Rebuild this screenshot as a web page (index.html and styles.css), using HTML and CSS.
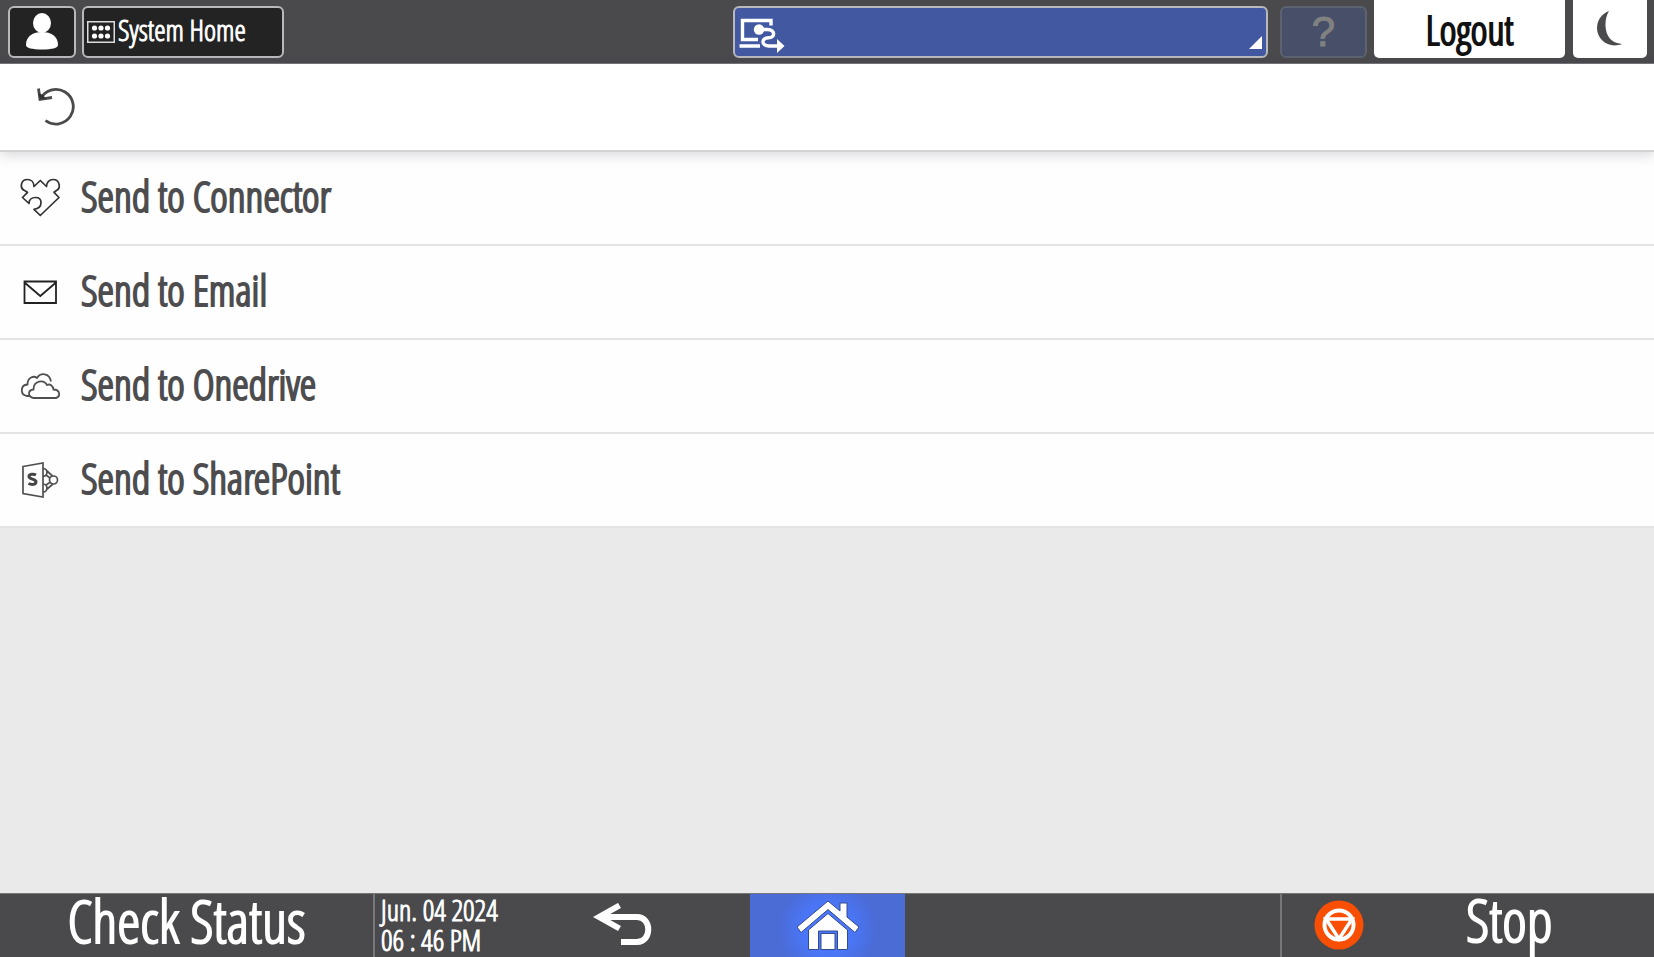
FILE: index.html
```html
<!DOCTYPE html>
<html lang="en">
<head>
<meta charset="utf-8">
<meta name="viewport" content="width=device-width, initial-scale=1">
<title>System Home</title>
<link rel="stylesheet" href="styles.css">
</head>
<body>
<header class="topbar">
  <button class="key key-user" type="button" aria-label="User">
    <svg width="34" height="38" viewBox="0 0 34 38" fill="#fff"><ellipse cx="17" cy="10" rx="9" ry="10"/><path d="M1 32C1 23 8 19 17 19s16 4 16 13c0 3-6 4.500-16 4.500S1 35 1 32z"/></svg>
  </button>
  <button class="key key-system" type="button">
    <svg width="28" height="22" viewBox="0 0 28 22"><rect x=".75" y=".75" width="26.500" height="20.500" fill="none" stroke="#ddd" stroke-width="1.500"/><g fill="#fff"><circle cx="7.500" cy="7" r="2.600"/><circle cx="14" cy="7" r="2.600"/><circle cx="20.500" cy="7" r="2.600"/><circle cx="7.500" cy="15" r="2.600"/><circle cx="14" cy="15" r="2.600"/><circle cx="20.500" cy="15" r="2.600"/></g></svg>
    <span class="key-label">System Home</span>
  </button>
  <button class="key key-message" type="button" aria-label="Remote connection">
    <svg width="46" height="36" viewBox="0 0 46 36" fill="none" stroke="#fff" stroke-width="3.400"><path d="M32 8.500V3.500H3.500V22.500H19M.5 29H21"/><circle cx="20" cy="12.500" r="5.200" fill="#fff" stroke="none"/><path d="M20 12.500h8.500c8 0 8 8.300 1 8.300-7.500 0-7.500 8.200.5 8.200H40"/><path d="M38 22L45.500 29l-7.500 7z" fill="#fff" stroke="none"/></svg>
    <svg class="corner" width="13" height="13" viewBox="0 0 13 13"><path d="M13 0V13H0z" fill="#fff"/></svg>
  </button>
  <button class="key key-help" type="button" disabled>?</button>
  <button class="tab tab-logout" type="button">Logout</button>
  <button class="tab tab-sleep" type="button" aria-label="Sleep">
    <svg width="26" height="36" viewBox="0 0 26 36"><path d="M12 0C4 3 0 10 0 17c0 12 12 21 25 16C14 32 9 25 8.500 15 8.300 9 9.500 4 12 0z" fill="#4b4b4d"/></svg>
  </button>
</header>
<nav class="toolbar">
  <button class="return" type="button" aria-label="Return">
    <svg width="40" height="40" viewBox="0 0 40 40" fill="none" stroke="#4a4a4c" stroke-width="2.800"><path d="M4.500 12A17.300 17.300 0 1 1 9.500 33.500"/><path d="M2.500 1.500L4 12.500 16 10.500"/><path d="M2.500 6L4 12.500 10 11.500 7 8z" fill="#333" stroke="none"/></svg>
  </button>
</nav>
<main class="content">
  <ul class="menu">
    <li><a class="item" href="#connector">
      <svg class="icon" viewBox="0 0 40 40" fill="none" stroke="#333" stroke-width="1.700" stroke-linejoin="round"><path d="M14 8.500L20.300 2.500 26.500 8.500C26.500 4 29.500 1.500 33 1.500c7 0 8 9 3.500 11l-2.500 1.800 5 5.200L20.300 37.500 14 31.300c4.500-.5 7-3 7-6.800 0-3-2-5-5.500-5-4 0-6.500 2.500-6.500 6L2.500 19.500l5-5.200L4.500 12.500C-.5 10.500.5 1.500 7.500 1.500 11 1.500 14 4 14 8.500z"/></svg>
      <span>Send to Connector</span></a></li>
    <li><a class="item" href="#email">
      <svg class="icon" viewBox="0 0 40 40" fill="none" stroke="#222" stroke-width="1.800"><path d="M4.500 9.500H36V31H4.500zM4.500 10.500L20.300 24 36 10.500"/></svg>
      <span>Send to Email</span></a></li>
    <li><a class="item" href="#onedrive">
      <svg class="icon" viewBox="0 0 40 40" fill="none" stroke="#505050" stroke-width="1.800"><path d="M10 30H7C0 29 0 19 7.500 18.500 7.500 11 14 9.500 17 12 20.500 6.500 29.500 6.500 31 15.500"/><path d="M13.500 32C7.500 31 7.500 24 13.500 23.500c0-9 10-10.500 13.500-4.500 3-1.500 6 .5 6.500 4.500 7 0 7 7.500 2.500 8.500z"/></svg>
      <span>Send to Onedrive</span></a></li>
    <li><a class="item" href="#sharepoint">
      <svg class="icon" viewBox="0 0 40 40" fill="none" stroke="#505050" stroke-width="1.700"><path d="M3 6.500L23 3v34L3 33.500z"/><path d="M16 15c-2-1.200-7-1.300-7 1.500 0 3 7 2.200 7 5.300 0 3.300-5 3-7.500 1.700" stroke="#444" stroke-width="3"/><path d="M23 8.500c5 0 5.500 7.500 0 8M23 24c5.500 0 5 8 0 8M26.500 10.500l6 5.500M26 15l4 3M26 25l4.500-3M26.500 29.500l6.500-5.500"/><circle cx="33.500" cy="20" r="4"/></svg>
      <span>Send to SharePoint</span></a></li>
  </ul>
</main>
<footer class="bottombar">
  <button class="cell status" type="button">Check Status</button>
  <div class="cell clock-back">
    <time class="clock" datetime="2024-06-04T18:46"><span>Jun. 04 2024</span><span>06 : 46 PM</span></time>
    <button class="back" type="button" aria-label="Back">
      <svg width="60" height="44" viewBox="0 0 60 44" fill="none" stroke="#fff" stroke-width="6"><path d="M8 14H44c15 0 15 25 0 25H28"/><path d="M26.500 2.500L6 14 26.500 25.500"/></svg>
    </button>
  </div>
  <button class="cell home" type="button" aria-label="Home">
    <svg width="62" height="50" viewBox="0 0 62 50" fill="#fff" stroke="#354b8f" stroke-width="1"><path d="M31 1L43 11V3h7v14l12 10-4 5.500L31 9.500 4 32.500 0 27z"/><path d="M11.500 30L31 13.500 50.500 30V49.500H40.500V31H21.500V49.500H11.500z"/><path d="M24 33.500H38V49.500H24z"/></svg>
  </button>
  <div class="cell"></div>
  <button class="cell stop" type="button">
    <svg width="50" height="50" viewBox="0 0 50 50"><circle cx="25" cy="25" r="24.500" fill="#f84f05"/><g fill="none" stroke="#fff" stroke-width="4"><circle cx="25" cy="25" r="14.500"/><path d="M12 19H38L25 39z" stroke-width="3.500"/></g></svg>
    <span class="big-label">Stop</span>
  </button>
</footer>
</body>
</html>
```
FILE: styles.css
```css
* { box-sizing: border-box; }

body {
  margin: 0;
  min-height: 100vh;
  display: flex;
  flex-direction: column;
  background: #eaeaea;
  color: #4d4d4f;
  font-family: "Open Sans Condensed Light", "Roboto Condensed", sans-serif;
  -webkit-text-stroke: 1px currentColor;
}

button {
  margin: 0;
  padding: 0;
  border: 0;
  background: none;
  color: inherit;
  font: inherit;
}

svg { display: block; flex: none; }

.topbar {
  display: flex;
  align-items: flex-start;
  height: 64px;
  padding: 0 7px 0 8px;
  background: #4a4a4d;
  border-bottom: 1px solid #77777a;
}

.key {
  display: flex;
  align-items: center;
  height: 52px;
  margin-top: 6px;
  border: 2px solid #b9b9bb;
  border-radius: 6px;
  background: #232323;
  color: #fff;
}

.key-user { width: 68px; justify-content: center; }

.key-system {
  width: 202px;
  margin-left: 6px;
  padding-left: 3px;
  gap: 3px;
  font-size: 29px;
  line-height: 32px;
}

.key-label { padding-bottom: 4px; }

.key-message {
  position: relative;
  flex: 0 1 535px;
  margin-left: auto;
  padding: 5px 0 0 4px;
  background: #4259a1;
}

.corner { position: absolute; right: 4px; bottom: 7px; }

.key-help {
  width: 87px;
  margin-left: 12px;
  justify-content: center;
  border-color: #5d6270;
  background: #474f69;
  color: #818181;
  font-family: "Liberation Sans", sans-serif;
  font-size: 42px;
}

.tab {
  display: flex;
  align-items: center;
  justify-content: center;
  height: 58px;
  border-radius: 0 0 5px 5px;
  background: #fff;
}

.tab-logout { width: 191px; margin-left: 7px; color: #111; font-size: 40px; -webkit-text-stroke-width: 2px; }
.tab-sleep { width: 74px; margin-left: 8px; }

.toolbar {
  position: relative;
  display: flex;
  align-items: center;
  height: 88px;
  padding-left: 36px;
  background: #fff;
  border-bottom: 2px solid #d2d2d3;
  box-shadow: 0 3px 12px rgba(60, 60, 80, .2);
}

.content { flex: 1; }

.menu { margin: 0; padding: 0; list-style: none; }

.item {
  display: flex;
  align-items: center;
  gap: 21px;
  height: 94px;
  padding-left: 20px;
  background: #fefefe;
  border-bottom: 2px solid #e3e3e4;
  color: #4d4d4f;
  font-size: 42px;
  line-height: 52px;
  text-decoration: none;
  -webkit-text-stroke-width: 2px;
}

.item span { padding-bottom: 5px; }

.icon { width: 40px; height: 40px; }

.bottombar {
  display: grid;
  grid-template-columns: 373fr 377fr 155fr 375fr 374fr;
  height: 64px;
  background: #4a4a4d;
  color: #fff;
}

.cell { border-top: 1px solid #77777a; }

.status,
.big-label {
  padding-bottom: 12px;
  font-size: 59px;
  line-height: 50px;
  -webkit-text-stroke-width: 2px;
}

.clock-back {
  display: flex;
  align-items: center;
  border-left: 2px solid #77777a;
}

.clock {
  display: flex;
  flex-direction: column;
  width: 58%;
  padding: 0 0 3px 6px;
  font-size: 29px;
  line-height: 30px;
  white-space: nowrap;
}

.back { padding-bottom: 3px; }

.home {
  display: flex;
  align-items: center;
  justify-content: center;
  padding-bottom: 3px;
  background: radial-gradient(circle at 50% 55%, #4a78ff 0, #4a76f8 24px, #4b6bd5 50px);
}

.stop {
  display: flex;
  align-items: center;
  gap: 30%;
  padding: 0 0 2px 32px;
  border-left: 2px solid #77777a;
}
```
